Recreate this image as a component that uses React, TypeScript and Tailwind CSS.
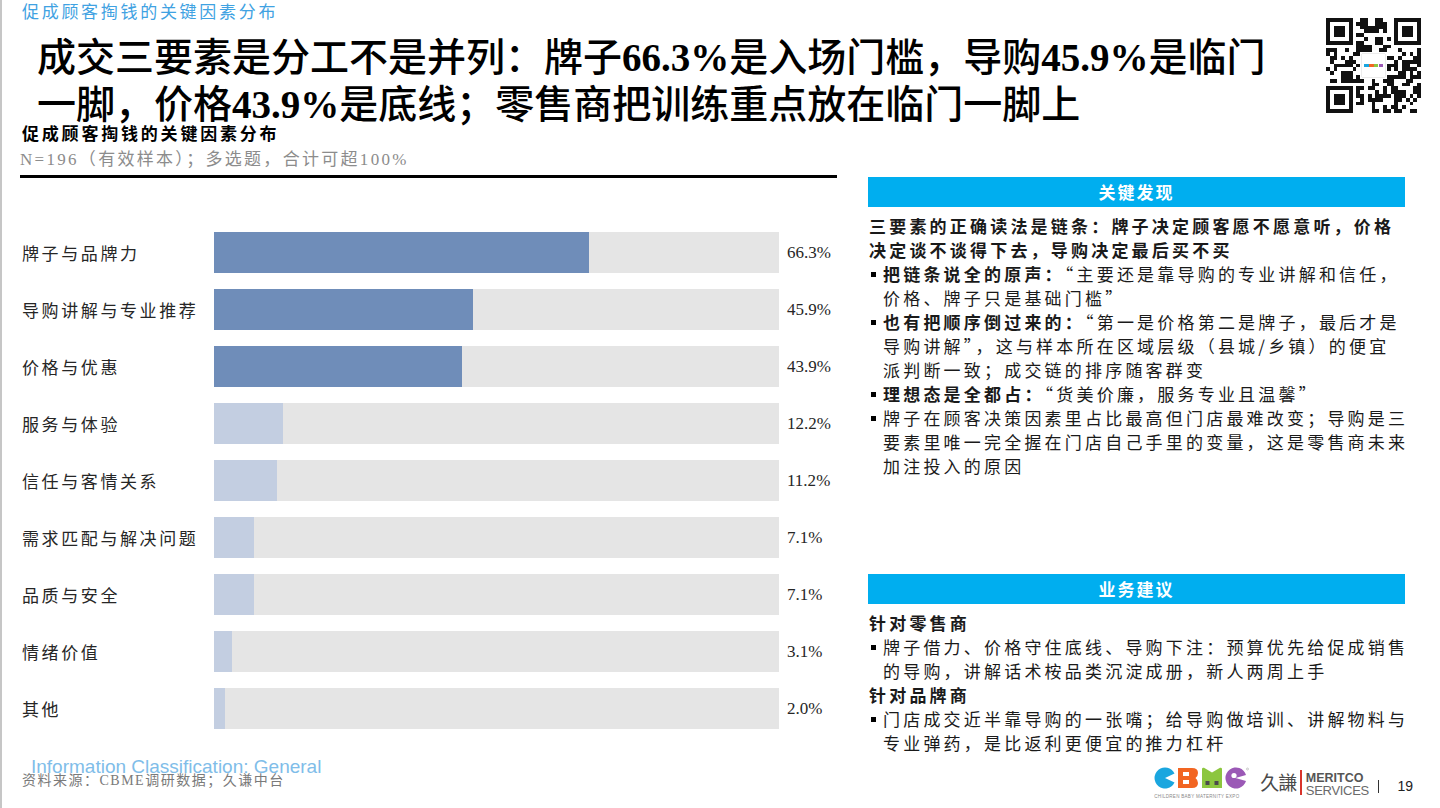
import type { ReactNode } from 'react'

type Factor = {
  label: string
  pct: number
  primary?: boolean
}

const factors: Factor[] = [
  { label: '牌子与品牌力', pct: 66.3, primary: true },
  { label: '导购讲解与专业推荐', pct: 45.9, primary: true },
  { label: '价格与优惠', pct: 43.9, primary: true },
  { label: '服务与体验', pct: 12.2 },
  { label: '信任与客情关系', pct: 11.2 },
  { label: '需求匹配与解决问题', pct: 7.1 },
  { label: '品质与安全', pct: 7.1 },
  { label: '情绪价值', pct: 3.1 },
  { label: '其他', pct: 2.0 },
]

export default function App() {
  return (
    <div className="w-[1440px] h-[808px] bg-white border-l-2 border-[#c6c6c6] flex flex-col overflow-hidden text-[#1a1a1a] font-['Liberation_Serif','Noto_Sans_CJK_SC',serif]">
      <header className="h-[124px] flex shrink-0">
        <div className="flex-1">
          <div className="h-[24px] pt-[2px] pl-[20px] text-[17px] leading-[22px] tracking-[2.7px] text-[#3fa2e2]">
            促成顾客掏钱的关键因素分布
          </div>
          <h1 className="mt-[10px] h-[90px] pl-[35px] text-[39px] leading-[47px] font-medium whitespace-nowrap text-black">
            成交三要素是分工不是并列：牌子<span className="font-bold">66.3%</span>是入场门槛，导购<span className="font-bold">45.9%</span>是临门
            <br />
            一脚，价格<span className="font-bold">43.9%</span>是底线；零售商把训练重点放在临门一脚上
          </h1>
        </div>
        <QrCode />
      </header>

      <div className="h-[631px] flex shrink-0">
        <div className="w-[838px] pl-[18px]">
          <div className="pl-[2px] text-[17px] leading-[22px] font-bold tracking-[2.8px] text-black">
            促成顾客掏钱的关键因素分布
          </div>
          <div className="mt-[3px] text-[17px] leading-[22px] tracking-[2.3px] text-[#8c8c8c]">
            N=196（有效样本）；多选题，合计可超100%
          </div>
          <div className="mt-[4px] h-[3px] w-[817px] bg-black" />

          <div className="mt-[54px] flex flex-col gap-[16px]">
            {factors.map(f => (
              <FactorRow key={f.label} factor={f} />
            ))}
          </div>
        </div>

        <div className="w-[537px] ml-[28px] pt-[53px] font-['Noto_Sans_CJK_SC',sans-serif]">
          <section className="h-[397px]">
            <PanelHeader>关键发现</PanelHeader>
            <div className="mt-[7px] text-[17px] leading-[24px] tracking-[3.2px] whitespace-nowrap">
              <p className="pl-[1px] font-bold">
                三要素的正确读法是链条：牌子决定顾客愿不愿意听，价格
                <br />
                决定谈不谈得下去，导购决定最后买不买
              </p>
              <Bullet>
                <b>把链条说全的原声：</b>“主要还是靠导购的专业讲解和信任，
                <br />
                价格、牌子只是基础门槛”
              </Bullet>
              <Bullet>
                <b>也有把顺序倒过来的：</b>“第一是价格第二是牌子，最后才是
                <br />
                导购讲解”，这与样本所在区域层级（县城/乡镇）的便宜
                <br />
                派判断一致；成交链的排序随客群变
              </Bullet>
              <Bullet>
                <b>理想态是全都占：</b>“货美价廉，服务专业且温馨”
              </Bullet>
              <Bullet>
                牌子在顾客决策因素里占比最高但门店最难改变；导购是三
                <br />
                要素里唯一完全握在门店自己手里的变量，这是零售商未来
                <br />
                加注投入的原因
              </Bullet>
            </div>
          </section>

          <section>
            <PanelHeader>业务建议</PanelHeader>
            <div className="mt-[7px] text-[17px] leading-[24px] tracking-[3.2px] whitespace-nowrap">
              <p className="pl-[1px] font-bold">针对零售商</p>
              <Bullet>
                牌子借力、价格守住底线、导购下注：预算优先给促成销售
                <br />
                的导购，讲解话术桉品类沉淀成册，新人两周上手
              </Bullet>
              <p className="pl-[1px] font-bold">针对品牌商</p>
              <Bullet>
                门店成交近半靠导购的一张嘴；给导购做培训、讲解物料与
                <br />
                专业弹药，是比返利更便宜的推力杠杆
              </Bullet>
            </div>
          </section>
        </div>
      </div>

      <footer className="h-[53px] flex shrink-0">
        <div className="pl-[20px]">
          <div className="pt-[3px] pl-[9px] text-[19px] leading-[17px] text-[#80bde9] font-['Liberation_Sans',sans-serif]">
            Information Classification: General
          </div>
          <div className="-mt-[2px] text-[14px] leading-[16px] tracking-[1.5px] text-[#7a7a7a]">
            资料来源：CBME调研数据；久谦中台
          </div>
        </div>

        <div className="ml-auto mr-[27px] pt-[12px] flex items-start">
          <CbmeLogo />
          <div className="ml-[11px] mt-[3px] text-[19px] leading-[24px] tracking-[-1px] text-[#4a4a4a] font-['Noto_Sans_CJK_TC',sans-serif]">
            久謙
          </div>
          <div className="ml-[4px] mt-[3px] w-[1.5px] h-[25px] bg-[#d9342b]" />
          <div className="ml-[4px] mt-[5px] flex flex-col font-['Liberation_Sans',sans-serif]">
            <span className="text-[12.5px] leading-[12px] font-bold text-[#555]">MERITCO</span>
            <span className="text-[13px] leading-[13px] tracking-[-0.3px] text-[#6a6a6a]">SERVICES</span>
          </div>
          <div className="ml-[9px] mt-[13px] w-[1.5px] h-[13px] bg-[#333]" />
          <div className="ml-[18px] mt-[11px] text-[14px] leading-[16px] text-[#222] font-['Liberation_Sans',sans-serif]">
            19
          </div>
        </div>
      </footer>
    </div>
  )
}

function FactorRow({ factor }: { factor: Factor }) {
  return (
    <div className="flex items-center h-[41px]">
      <div className="w-[194px] pl-[2px] text-[17px] tracking-[2.6px] text-[#262626] font-['Noto_Sans_CJK_SC',sans-serif]">
        {factor.label}
      </div>
      <div className="w-[565px] h-full bg-[#e5e5e5]">
        <div
          className={`h-full ${factor.primary ? 'bg-[#6f8db9]' : 'bg-[#c3cee1]'}`}
          style={{ width: `${factor.pct}%` }}
        />
      </div>
      <div className="pl-[8px] text-[17px] text-[#262626]">{factor.pct.toFixed(1)}%</div>
    </div>
  )
}

function PanelHeader({ children }: { children: ReactNode }) {
  return (
    <div className="h-[30px] bg-[#00aeef] flex items-center justify-center text-white text-[17px] font-bold tracking-[2px]">
      {children}
    </div>
  )
}

function Bullet({ children }: { children: ReactNode }) {
  return (
    <div className="flex">
      <span className="w-[15px] shrink-0 flex items-start pt-[10px] pl-[3px]">
        <span className="block w-[5px] h-[5px] bg-black" />
      </span>
      <p>{children}</p>
    </div>
  )
}

function QrCode() {
  const n = 25
  let seed = 20240519
  const rnd = () => {
    seed = (seed * 16807) % 2147483647
    return seed / 2147483647
  }
  const inFinder = (x: number, y: number) =>
    (x < 8 && y < 8) || (x >= n - 8 && y < 8) || (x < 8 && y >= n - 8)
  const inLogo = (x: number, y: number) => x >= 9 && x <= 15 && y >= 9 && y <= 15

  const cells: [number, number][] = []
  for (let y = 0; y < n; y++) {
    for (let x = 0; x < n; x++) {
      const r = rnd()
      if (inFinder(x, y) || inLogo(x, y)) continue
      if (r < 0.52) cells.push([x, y])
    }
  }
  const finders = [
    [0, 0],
    [n - 7, 0],
    [0, n - 7],
  ]

  return (
    <svg className="mt-[18px] mr-[19px] w-[95px] h-[95px] shrink-0" viewBox="0 0 25 25" shapeRendering="crispEdges">
      <rect width="25" height="25" fill="#fff" />
      {cells.map(([x, y]) => (
        <rect key={`${x}-${y}`} x={x} y={y} width="1" height="1" fill="#111" />
      ))}
      {finders.map(([fx, fy]) => (
        <g key={`${fx}-${fy}`}>
          <rect x={fx} y={fy} width="7" height="7" fill="#111" />
          <rect x={fx + 1} y={fy + 1} width="5" height="5" fill="#fff" />
          <rect x={fx + 2} y={fy + 2} width="3" height="3" fill="#111" />
        </g>
      ))}
      <rect x="9.3" y="9.3" width="6.4" height="6.4" rx="0.8" fill="#fff" stroke="#ddd" strokeWidth="0.15" />
      <rect x="10" y="12.2" width="1.2" height="0.7" fill="#1aa6df" />
      <rect x="11.3" y="12.2" width="1.2" height="0.7" fill="#f26522" />
      <rect x="12.6" y="12.2" width="1.2" height="0.7" fill="#8cc63f" />
      <rect x="13.9" y="12.2" width="1.2" height="0.7" fill="#9b59b6" />
    </svg>
  )
}

function CbmeLogo() {
  return (
    <div className="flex flex-col items-start">
      <svg width="95" height="24" viewBox="0 0 95 24">
        {/* C */}
        <path d="M11 11 L20.5 6.5 A10.5 10.5 0 1 0 20.5 15.5 Z" fill="#1aa6df" />
        {/* B */}
        <path d="M24 1 H38 Q44 1 44 6 Q44 9 41.5 11 Q44 13 44 16 Q44 21 38 21 H24 Z" fill="#f26522" />
        <rect x="29" y="5" width="6" height="4" fill="#fff" />
        <rect x="29" y="13" width="6" height="4" fill="#fff" />
        {/* M */}
        <path d="M48 21 V2 Q48 0.5 50 0.8 L58 5.5 L66 0.8 Q68 0.5 68 2 V21 Z" fill="#8cc63f" />
        <rect x="51.5" y="14" width="4" height="4" fill="#4a4a4a" />
        <rect x="60.5" y="14" width="4" height="4" fill="#4a4a4a" />
        {/* e */}
        <path d="M81.5 11 L92 14 A10.5 10.5 0 1 1 92 8 Z" fill="#9b59b6" />
        <circle cx="80" cy="8.5" r="2.6" fill="#fff" />
        <circle cx="93.5" cy="2" r="1" fill="none" stroke="#999" strokeWidth="0.5" />
      </svg>
      <span className="mt-[3px] text-[4.5px] leading-[5px] tracking-[0.3px] text-[#888] font-['Liberation_Sans',sans-serif] whitespace-nowrap">
        CHILDREN BABY MATERNITY EXPO
      </span>
    </div>
  )
}
